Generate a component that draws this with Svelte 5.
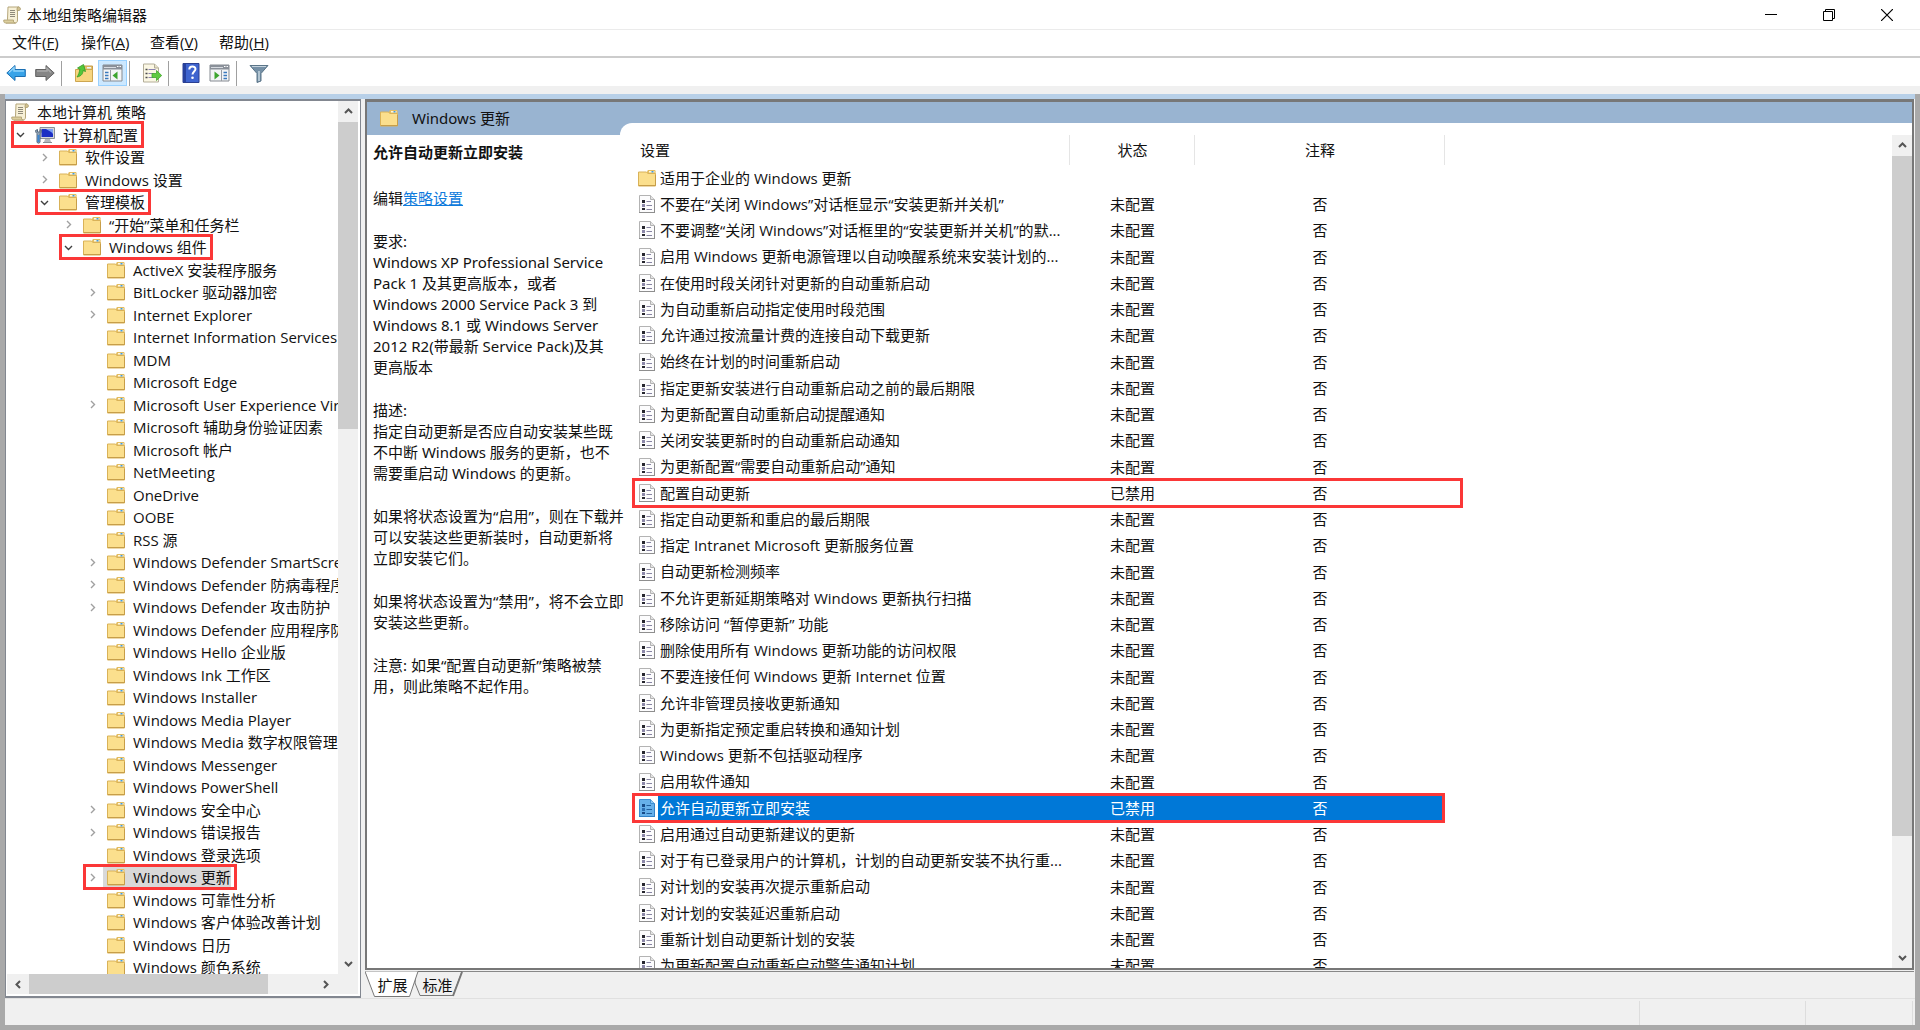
<script>

    // icon level in the tree, arrow: 'open' | 'closed' | none
    const tree = [
        { level: 0, label: '本地计算机 策略', icon: 'scroll' },
        { level: 1, label: '计算机配置', icon: 'computer', arrow: 'open', marked: true },
        { level: 2, label: '软件设置', arrow: 'closed' },
        { level: 2, label: 'Windows 设置', arrow: 'closed' },
        { level: 2, label: '管理模板', arrow: 'open', marked: true },
        { level: 3, label: '“开始”菜单和任务栏', arrow: 'closed' },
        { level: 3, label: 'Windows 组件', arrow: 'open', marked: true },
        { level: 4, label: 'ActiveX 安装程序服务' },
        { level: 4, label: 'BitLocker 驱动器加密', arrow: 'closed' },
        { level: 4, label: 'Internet Explorer', arrow: 'closed' },
        { level: 4, label: 'Internet Information Services' },
        { level: 4, label: 'MDM' },
        { level: 4, label: 'Microsoft Edge' },
        { level: 4, label: 'Microsoft User Experience Virtualization', arrow: 'closed' },
        { level: 4, label: 'Microsoft 辅助身份验证因素' },
        { level: 4, label: 'Microsoft 帐户' },
        { level: 4, label: 'NetMeeting' },
        { level: 4, label: 'OneDrive' },
        { level: 4, label: 'OOBE' },
        { level: 4, label: 'RSS 源' },
        { level: 4, label: 'Windows Defender SmartScreen', arrow: 'closed' },
        { level: 4, label: 'Windows Defender 防病毒程序', arrow: 'closed' },
        { level: 4, label: 'Windows Defender 攻击防护', arrow: 'closed' },
        { level: 4, label: 'Windows Defender 应用程序防护' },
        { level: 4, label: 'Windows Hello 企业版' },
        { level: 4, label: 'Windows Ink 工作区' },
        { level: 4, label: 'Windows Installer' },
        { level: 4, label: 'Windows Media Player' },
        { level: 4, label: 'Windows Media 数字权限管理' },
        { level: 4, label: 'Windows Messenger' },
        { level: 4, label: 'Windows PowerShell' },
        { level: 4, label: 'Windows 安全中心', arrow: 'closed' },
        { level: 4, label: 'Windows 错误报告', arrow: 'closed' },
        { level: 4, label: 'Windows 登录选项' },
        { level: 4, label: 'Windows 更新', arrow: 'closed', marked: true, selected: true },
        { level: 4, label: 'Windows 可靠性分析' },
        { level: 4, label: 'Windows 客户体验改善计划' },
        { level: 4, label: 'Windows 日历' },
        { level: 4, label: 'Windows 颜色系统' },
    ];

    const policies = [
        '不要在“关闭 Windows”对话框显示“安装更新并关机”',
        '不要调整“关闭 Windows”对话框里的“安装更新并关机”的默...',
        '启用 Windows 更新电源管理以自动唤醒系统来安装计划的...',
        '在使用时段关闭针对更新的自动重新启动',
        '为自动重新启动指定使用时段范围',
        '允许通过按流量计费的连接自动下载更新',
        '始终在计划的时间重新启动',
        '指定更新安装进行自动重新启动之前的最后期限',
        '为更新配置自动重新启动提醒通知',
        '关闭安装更新时的自动重新启动通知',
        '为更新配置“需要自动重新启动”通知',
        '配置自动更新',
        '指定自动更新和重启的最后期限',
        '指定 Intranet Microsoft 更新服务位置',
        '自动更新检测频率',
        '不允许更新延期策略对 Windows 更新执行扫描',
        '移除访问 “暂停更新” 功能',
        '删除使用所有 Windows 更新功能的访问权限',
        '不要连接任何 Windows 更新 Internet 位置',
        '允许非管理员接收更新通知',
        '为更新指定预定重启转换和通知计划',
        'Windows 更新不包括驱动程序',
        '启用软件通知',
        '允许自动更新立即安装',
        '启用通过自动更新建议的更新',
        '对于有已登录用户的计算机，计划的自动更新安装不执行重...',
        '对计划的安装再次提示重新启动',
        '对计划的安装延迟重新启动',
        '重新计划自动更新计划的安装',
        '为更新配置自动重新启动警告通知计划',
    ];

    const disabled = ['配置自动更新', '允许自动更新立即安装'];

    const menus = [
        ['文件', 'F'],
        ['操作', 'A'],
        ['查看', 'V'],
        ['帮助', 'H'],
    ];

    let selected = $state('允许自动更新立即安装');

</script>

{#snippet folder()}
    <svg class="icon" width="18" height="18" viewBox="0 0 18 18" aria-hidden="true">
        <path d="M9 2.5 10 1h7l.6 1v14.5H9z" fill="#e3bd62" />
        <path d="M11 2h5.500v1.500H11z" fill="#fff8e0" />
        <path d="M13.500 2h2v1.500h-2z" fill="#3f9be0" />
        <path d="M.5 3h8l1.300 1.500H17.500V17H.500z" fill="#fbdf8d" stroke="#d9b258" />
        <path d="M1 16.500h16.500V6" fill="none" stroke="#c79e49" />
    </svg>
{/snippet}

{#snippet scroll()}
    <svg class="icon" width="18" height="18" viewBox="0 0 18 18" aria-hidden="true">
        <path d="M5 1h11c-1.500.5-1.500 2-1.500 3.500V14c0 2-1 3-2 3H3c1.500-.5 1.500-2 1.500-3.500z" fill="#f7f0d6" stroke="#b5a67a" />
        <path d="M15.500 1c2.500 0 2.500 3.500.5 3.500h-2c0-2 0-3.500 1.500-3.500z" fill="#d3c393" stroke="#a99a6b" stroke-width=".8" />
        <path d="M.8 14h9.700c-.5 1.500.5 3 2 3H2.500C1 17 .5 15.500.8 14z" fill="#dccf9f" stroke="#a99a6b" stroke-width=".8" />
        <path d="M7 4.500h5M7 6.500h5M7 8.500h5M7 10.500h5" stroke="#8f8a7a" />
    </svg>
{/snippet}

{#snippet computer()}
    <svg class="icon" width="20" height="18" viewBox="0 0 20 18" aria-hidden="true">
        <path d="M5 1.500h14.500v11H5z" fill="#d6d8db" stroke="#8b9198" />
        <path d="M6.500 3h11.500v8H6.500z" fill="#1c2fc4" />
        <path d="M11 3h7v5c-2-3-4-3-7-5z" fill="#7da1f2" />
        <path d="M10 13h5l1 3H9z" fill="#b4b8bd" />
        <path d="M8 16.500h9" stroke="#888e94" />
        <path d="M.5 4.500c0 2 1 2.500 1.500 3V16c0 1.500 3 1.500 3 0V7.500c1-.5 1.500-1.500 1.500-3L5 3.500v2.500H2.500V3.500z" fill="#8fa4b8" stroke="#56697c" />
        <path d="M3.500 9v7" stroke="#3c87d2" stroke-width="2" />
    </svg>
{/snippet}

{#snippet policy(active)}
    <svg class="icon" width="18" height="20" viewBox="0 0 18 20" aria-hidden="true">
        <path d="M1.500 1.500h11l4 4v13h-15z" fill={active ? '#66b0ea' : '#fcfcfd'} stroke={active ? '#3e8fd2' : '#b3b3b3'} />
        <path d="M1 18.500h16M16.500 6v12" stroke={active ? '#3182c8' : '#8e8e8e'} />
        <path d="M12.500 1.500v4h4" fill={active ? '#8cc6f2' : '#e4e4e4'} stroke={active ? '#3e8fd2' : '#b3b3b3'} />
        <path d="M4 6h3v3H4zM4 14h3v2H4z" fill={active ? '#174a86' : '#26262e'} />
        <path d="M4 10h3v3H4z" fill={active ? '#2c6fb4' : '#8b87a8'} />
        <path d="M8.500 7.500H13M8.500 11.500H14M8.500 15.500H14" stroke={active ? '#205f9e' : '#8885a3'} />
    </svg>
{/snippet}

{#snippet chevron(direction)}
    <svg class="chevron {direction}" width="9" height="9" viewBox="0 0 9 9" aria-hidden="true">
        <path d="M1 3l3.500 3.500L8 3" fill="none" stroke="currentColor" />
    </svg>
{/snippet}

<div class="window">

    <header class="titlebar">
        {@render scroll()}
        <h1>本地组策略编辑器</h1>
        <div class="controls">
            <button aria-label="最小化"><svg width="12" height="12" viewBox="0 0 12 12"><path d="M0 5.500h12" stroke="#000" /></svg></button>
            <button aria-label="向下还原"><svg width="12" height="12" viewBox="0 0 12 12"><path d="M.5 2.500h9v9h-9zM2.500 2.500v-2h9v9h-2" fill="none" stroke="#000" /></svg></button>
            <button aria-label="关闭"><svg width="12" height="12" viewBox="0 0 12 12"><path d="M0 0l12 12M12 0L0 12" stroke="#000" stroke-width="1.200" /></svg></button>
        </div>
    </header>

    <nav class="menubar">
        {#each menus as [name, key]}
            <button>{name}(<u>{key}</u>)</button>
        {/each}
    </nav>

    <div class="toolbar">
        <button aria-label="后退">
            <svg width="20" height="18" viewBox="0 0 20 18"><path d="M.8 9 9 1.500v4h10.300v7H9v4z" fill="#38a3e8" stroke="#1b6fb3" /><path d="M3 8.500 8 4v3h10" fill="none" stroke="#8fd3fa" stroke-width="1.500" /></svg>
        </button>
        <button aria-label="前进">
            <svg width="20" height="18" viewBox="0 0 20 18"><path d="M19.200 9 11 1.500v4H.7v7H11v4z" fill="#858585" stroke="#636363" /><path d="M2 7h10V4.500l4 4" fill="none" stroke="#a9a9a9" stroke-width="1.500" /></svg>
        </button>
        <span class="divider"></span>
        <button aria-label="上一级">
            <svg width="20" height="20" viewBox="0 0 20 20"><path d="M10 3h8.500v4H10z" fill="#e5c16b" stroke="#c59b48" /><path d="M13 4h4v1.500h-4z" fill="#e9f4fc" /><path d="M1.500 6.500h17v12h-17z" fill="#f7d580" stroke="#cda651" /><path d="M3 14c5-1 6-4 6-6.500l2.500 1L9.500 1.500 3.500 5l2.300 1.200C5.500 9 4.500 12 3 14z" fill="#54c73a" stroke="#329a24" stroke-width=".8" /></svg>
        </button>
        <button class="pressed" aria-label="显示/隐藏控制台树">
            <svg width="21" height="18" viewBox="0 0 21 18"><path d="M1 1h19v16H1z" fill="#f4f5f7" stroke="#858a91" /><path d="M1 1h19v4.500H1z" fill="#8a9099" /><path d="M2 3.500h12" stroke="#d6dae0" /><path d="M15 2.500h1.500M17.500 2.500H19" stroke="#fff" /><path d="M8.500 6v11" stroke="#989da4" /><path d="M3 8.500h3.500M3 11.500h3.500M3 14.500h3.500" stroke="#3979bd" stroke-width="1.500" /><path d="M15.500 7.500v8L10.500 11.500z" fill="#3da52f" /></svg>
        </button>
        <span class="divider"></span>
        <button aria-label="导出列表">
            <svg width="20" height="20" viewBox="0 0 20 20"><path d="M1.500 1h11l4 4v14h-15z" fill="#fbf7e4" stroke="#b3ad98" /><path d="M12.500 1v4h4" fill="#e7e1c9" stroke="#b3ad98" /><path d="M3.500 6.500h2M3.500 10.500h2M3.500 14.500h2" stroke="#4a4a4a" stroke-width="1.500" /><path d="M6.500 6.500h7M6.500 10.500h5M6.500 14.500h5" stroke="#8a82b0" /><path d="M10 10.500h4.500V7.500l5.200 5-5.200 5v-3H10z" fill="#5fca3f" stroke="#43a62d" stroke-width=".8" /></svg>
        </button>
        <span class="divider"></span>
        <button aria-label="帮助">
            <svg width="18" height="20" viewBox="0 0 18 20"><path d="M1 .5h16v19H1z" fill="#3e64cf" stroke="#2a3f91" /><path d="M1 1h3v18H1z" fill="#27419e" /><path d="M7.300 6.500c0-4 6.200-3.800 6.200-.5 0 2.300-3 2.700-3 5.500" fill="none" stroke="#fff" stroke-width="2" /><circle cx="10.500" cy="14.700" r="1.300" fill="#fff" /></svg>
        </button>
        <button aria-label="显示/隐藏操作窗格">
            <svg width="21" height="18" viewBox="0 0 21 18"><path d="M1 1h19v16H1z" fill="#f4f5f7" stroke="#858a91" /><path d="M1 1h19v4.500H1z" fill="#8a9099" /><path d="M2 3.500h12" stroke="#d6dae0" /><path d="M15 2.500h1.500M17.500 2.500H19" stroke="#fff" /><path d="M12.500 6v11" stroke="#989da4" /><path d="M14.500 8.500H18M14.500 11.500H18M14.500 14.500H18" stroke="#3979bd" stroke-width="1.500" /><path d="M5.500 7.500v8l5-4z" fill="#3da52f" /></svg>
        </button>
        <span class="divider"></span>
        <button aria-label="筛选器">
            <svg width="20" height="20" viewBox="0 0 20 20"><path d="M1 2.500h18l-7 8V18l-4 1.500v-9z" fill="#7590a6" stroke="#5b7588" /><path d="M3 3.500h14" stroke="#c5d3de" /><path d="M10 8v10" stroke="#b2c5d2" stroke-width="2" /></svg>
        </button>
    </div>

    <div class="frame">
        <div class="panes">

            <aside class="tree-pane">
                <div class="tree-body">
                    <ul class="tree">
                        {#each tree as node}
                            <li class="level-{node.level}">
                                <div class="node" class:marked={node.marked}>
                                    <span class="arrow {node.arrow}">
                                        {#if node.arrow === 'open'}{@render chevron('down')}{/if}
                                        {#if node.arrow === 'closed'}{@render chevron('right')}{/if}
                                    </span>
                                    <span class="node-label" class:current={node.selected}>
                                        {#if node.icon === 'scroll'}
                                            {@render scroll()}
                                        {:else if node.icon === 'computer'}
                                            {@render computer()}
                                        {:else}
                                            {@render folder()}
                                        {/if}
                                        <span>{node.label}</span>
                                    </span>
                                </div>
                            </li>
                        {/each}
                    </ul>
                    <div class="scrollbar vertical">
                        <button aria-label="向上滚动">{@render chevron('up')}</button>
                        <div class="track"><div class="thumb tree-thumb"></div></div>
                        <button aria-label="向下滚动">{@render chevron('down')}</button>
                    </div>
                </div>
                <div class="scrollbar horizontal">
                    <button aria-label="向左滚动">{@render chevron('left')}</button>
                    <div class="track"><div class="thumb across-thumb"></div></div>
                    <button aria-label="向右滚动">{@render chevron('right')}</button>
                </div>
            </aside>

            <main class="result">
                <div class="view">

                    <div class="details">
                        <div class="banner">{@render folder()}<span>Windows 更新</span></div>
                        <div class="text">
                            <h2>允许自动更新立即安装</h2>
                            <p>编辑<a href="#policy">策略设置</a></p>
                            <p>
                                要求:<br />
                                Windows XP Professional Service<br />
                                Pack 1 及其更高版本，或者<br />
                                Windows 2000 Service Pack 3 到<br />
                                Windows 8.1 或 Windows Server<br />
                                2012 R2(带最新 Service Pack)及其<br />
                                更高版本
                            </p>
                            <p>
                                描述:<br />
                                指定自动更新是否应自动安装某些既<br />
                                不中断 Windows 服务的更新，也不<br />
                                需要重启动 Windows 的更新。
                            </p>
                            <p>
                                如果将状态设置为“启用”，则在下载并<br />
                                可以安装这些更新装时，自动更新将<br />
                                立即安装它们。
                            </p>
                            <p>
                                如果将状态设置为“禁用”，将不会立即<br />
                                安装这些更新。
                            </p>
                            <p>
                                注意: 如果“配置自动更新”策略被禁<br />
                                用，则此策略不起作用。
                            </p>
                        </div>
                    </div>

                    <div class="list">
                        <div class="list-inner">
                            <div class="list-scroll">
                                <table>
                                    <thead>
                                        <tr><th class="setting">设置</th><th class="state">状态</th><th class="comment">注释</th></tr>
                                    </thead>
                                    <tbody>
                                        <tr>
                                            <td><div class="cell">{@render folder()}<span>适用于企业的 Windows 更新</span></div></td>
                                            <td></td>
                                            <td></td>
                                        </tr>
                                        {#each policies as name}
                                            <tr
                                                class:selected={selected === name}
                                                class:marked={disabled.includes(name)}
                                                class:wide={name === '配置自动更新'}
                                                onclick={() => (selected = name)}
                                            >
                                                <td><div class="cell">{@render policy(selected === name)}<span>{name}</span></div></td>
                                                <td>{disabled.includes(name) ? '已禁用' : '未配置'}</td>
                                                <td>否</td>
                                            </tr>
                                        {/each}
                                    </tbody>
                                </table>
                            </div>
                            <div class="scrollbar vertical">
                                <button aria-label="向上滚动">{@render chevron('up')}</button>
                                <div class="track"><div class="thumb list-thumb"></div></div>
                                <button aria-label="向下滚动">{@render chevron('down')}</button>
                            </div>
                        </div>
                    </div>

                </div>

                <div class="tabs">
                    <svg class="tab-shapes" width="100" height="26" viewBox="0 0 100 26" aria-hidden="true">
                        <path d="M51 .5h46L88 24.500H55L50 12z" fill="#f0f0f0" stroke="#777" />
                        <path d="M97 1l-9 24" stroke="#777" stroke-width="2" />
                        <path d="M0 .5 9.500 25.500h35L53 .5" fill="#fff" stroke="#777" />
                    </svg>
                    <button>扩展</button>
                    <button>标准</button>
                </div>
            </main>

        </div>

        <footer class="status"><span></span><span></span><span></span></footer>
    </div>

</div>

<style>

    :global(body) {
        margin: 0;
        overflow: hidden;
    }

    .window {
        display: flex;
        flex-direction: column;
        height: 100vh;
        background: #fff;
        color: #111;
        font: 15px/20px "Open Sans", "Noto Sans CJK SC", sans-serif;
        white-space: nowrap;
    }

    button {
        display: flex;
        align-items: center;
        justify-content: center;
        margin: 0;
        padding: 0;
        border: none;
        background: none;
        color: inherit;
        font: inherit;
    }

    .icon, .chevron {
        display: block;
        flex: none;
    }

    .chevron.up { transform: rotate(180deg); }
    .chevron.left { transform: rotate(90deg); }
    .chevron.right { transform: rotate(-90deg); }

    /* title, menu and tool bars */

    .titlebar {
        display: flex;
        align-items: center;
        flex: none;
        height: 29px;
        padding-left: 3px;
        border-bottom: 1px solid #ebebeb;
    }

    h1 {
        flex: 1;
        margin: 0 0 0 6px;
        font-size: 15px;
        font-weight: 400;
    }

    .controls {
        display: flex;
        align-self: stretch;
        padding-right: 4px;
    }

    .controls button {
        width: 58px;
    }

    .menubar {
        display: flex;
        flex: none;
        height: 24px;
        padding: 0 0 2px 12px;
        border-bottom: 2px solid #ccc;
    }

    .menubar button {
        justify-content: flex-start;
        width: 69px;
    }

    .toolbar {
        display: flex;
        align-items: center;
        flex: none;
        height: 26px;
        padding: 2px 0 0 1px;
        border-bottom: 8px solid #f0f0f0;
    }

    .toolbar button {
        width: 29px;
        height: 26px;
    }

    .toolbar .pressed {
        background: #cce8ff;
        outline: 1px solid #99d1ff;
        outline-offset: -1px;
    }

    .divider {
        width: 1px;
        height: 25px;
        margin: 0 7px 0 2px;
        background: #a0a0a0;
    }

    /* frame round both panes */

    .frame {
        display: flex;
        flex: 1;
        flex-direction: column;
        min-height: 0;
        border: 5px solid #a9a9a9;
        border-top: none;
        background: #f0f0f0;
    }

    .panes {
        display: flex;
        flex: 1;
        gap: 4px;
        min-height: 0;
        padding-right: 1px;
        border-top: 5px solid #b8d0e8;
    }

    .tree-pane {
        display: flex;
        flex-direction: column;
        flex: none;
        box-sizing: border-box;
        width: 356px;
        padding: 0 2px 1px 1px;
        border: 2px solid #828790;
        border-width: 2px 1px;
        background: #fff;
    }

    .tree-body {
        display: flex;
        flex: 1;
        min-height: 0;
    }

    .tree {
        flex: 1;
        min-width: 0;
        margin: 0;
        padding: 0;
        overflow: hidden;
        list-style: none;
    }

    .tree li {
        display: flex;
        height: 22px;
    }

    .tree li:nth-child(even) {
        height: 23px;
    }

    .level-2 { padding-left: 24px; }
    .level-3 { padding-left: 48px; }
    .level-4 { padding-left: 72px; }

    .level-0 .arrow {
        display: none;
    }

    .node {
        position: relative;
        display: flex;
        margin-left: 4px;
    }

    .arrow {
        display: flex;
        align-items: center;
        width: 15px;
        padding-left: 5px;
        color: #a0a0a0;
    }

    .arrow.open {
        color: #404040;
    }

    .arrow :global(path) {
        stroke-width: 1.4;
    }

    .node-label {
        display: flex;
        align-items: center;
        gap: 8px;
        padding-left: 4px;
    }

    .level-0 .node-label {
        padding-left: 0;
    }

    .current {
        background: #d9d9d9;
    }

    .node.marked::after {
        content: "";
        position: absolute;
        inset: -2px -6px -2px 0;
        border: 3px solid #fb3737;
    }

    /* scroll bars */

    .scrollbar {
        display: flex;
        flex: none;
        background: #f0f0f0;
        color: #555;
    }

    .scrollbar :global(path) {
        stroke-width: 2;
    }

    .vertical {
        flex-direction: column;
        width: 20px;
    }

    .horizontal {
        height: 20px;
        margin-bottom: 1px;
        padding-right: 22px;
    }

    .scrollbar button {
        height: 21px;
    }

    .horizontal button {
        width: 22px;
    }

    .track {
        flex: 1;
    }

    .thumb {
        background: #cdcdcd;
    }

    .tree-thumb { height: 37%; }
    .list-thumb { height: 86%; }

    .across-thumb {
        width: 84%;
        height: 100%;
    }

    /* result pane */

    .result {
        display: flex;
        flex: 1;
        flex-direction: column;
        min-width: 0;
    }

    .view {
        display: flex;
        flex: 1;
        min-height: 0;
        border: 2px solid #777;
        border-top: 3px solid #777;
        background: #99b4d1;
    }

    /* the longest lines reach a little past the column */
    .details {
        position: relative;
        z-index: 1;
        display: flex;
        flex: none;
        flex-direction: column;
        width: 253px;
    }

    .banner {
        display: flex;
        align-items: center;
        gap: 14px;
        height: 31px;
        padding: 0 0 2px 13px;
    }

    .text {
        flex: 1;
        padding: 7px 6px;
        background: #fff;
        line-height: 21px;
    }

    .banner, .text {
        font-family: "Noto Sans", "Noto Sans CJK SC", sans-serif;
    }

    h2 {
        margin: 0 0 25px;
        font-size: 15px;
        line-height: 21px;
    }

    p {
        margin: 0 0 22px;
    }

    a {
        color: #0f7bdc;
    }

    .list {
        display: flex;
        flex: 1;
        flex-direction: column;
        min-width: 0;
        padding-top: 21px;
        background: linear-gradient(#99b4d1, #99b4d1) top / 100% 33px no-repeat #fff;
    }

    .list-inner {
        display: flex;
        flex: 1;
        min-height: 0;
        padding-top: 12px;
        border-top-left-radius: 12px;
        background: #fff;
    }

    .list-scroll {
        flex: 1;
        min-width: 0;
        padding-left: 12px;
        overflow: hidden;
    }

    table {
        width: 813px;
        table-layout: fixed;
        border-collapse: collapse;
    }

    th {
        height: 30px;
        padding: 0;
        box-shadow: inset -1px 0 #e5e5e5;
        font-weight: 400;
    }

    .setting {
        width: 430px;
        padding-left: 8px;
        text-align: left;
    }

    .state { width: 125px; }
    .comment { width: 250px; }

    td {
        height: 26px;
        padding: 0;
        text-align: center;
    }

    tr:nth-child(4n) td {
        height: 27px;
    }

    .cell {
        display: flex;
        align-items: center;
        height: 100%;
        text-align: left;
    }

    .cell .icon {
        margin: 0 2px 0 6px;
    }

    .cell span {
        flex: 1;
        padding-left: 2px;
        line-height: 25px;
    }

    tbody tr {
        position: relative;
    }

    .selected td {
        background: #0078d7;
        color: #fff;
    }

    .selected td:first-child {
        background: none;
    }

    .selected .cell span {
        background: #0078d7;
    }

    tr.marked::after {
        content: "";
        position: absolute;
        inset: -2px 0;
        border: 3px solid #fb3737;
    }

    tr.wide::after {
        right: -18px;
    }

    .tabs {
        position: relative;
        display: flex;
        flex: none;
        height: 26px;
        margin-top: 1px;
        padding-left: 5px;
        border-top: 1px solid #888;
    }

    .tab-shapes {
        position: absolute;
        left: 0;
        top: -1px;
    }

    .tabs button {
        position: relative;
        width: 45px;
        height: 25px;
    }

    /* status bar */

    .status {
        display: flex;
        justify-content: flex-end;
        flex: none;
        height: 24px;
        padding: 2px 2px 0 0;
        border-top: 1px solid #e0e0e0;
    }

    .status span {
        box-sizing: border-box;
        width: 166px;
        border-right: 1px solid #ddd;
    }

    .status span:last-child {
        width: 107px;
    }

</style>
